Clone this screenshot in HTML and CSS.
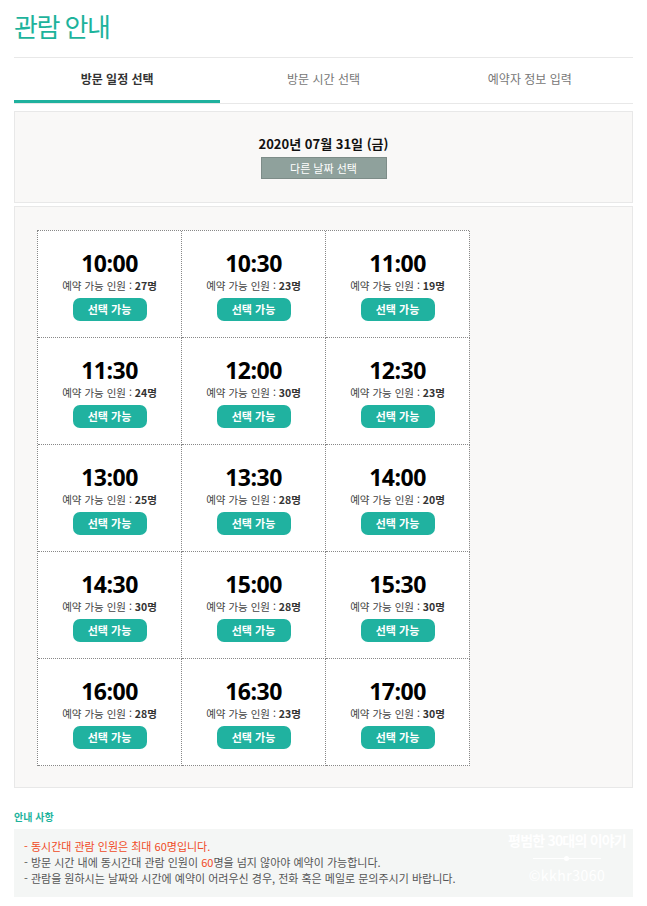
FILE: index.html
```html
<!DOCTYPE html>
<html lang="ko">
<head>
<meta charset="utf-8">
<title>관람 안내</title>
<link rel="stylesheet" href="styles.css">
</head>
<body>
<div class="page">
  <h1 class="title">관람 안내</h1>
  <nav class="tabs">
    <div class="tab active">방문 일정 선택</div>
    <div class="tab">방문 시간 선택</div>
    <div class="tab">예약자 정보 입력</div>
  </nav>
  <section class="date-box">
    <div class="date">2020년 07월 31일 (금)</div>
    <button class="date-btn">다른 날짜 선택</button>
  </section>
  <section class="slots-box">
    <div class="slots">
      <div class="slot"><div class="time">10:00</div><div class="cap">예약 가능 인원 : <b>27명</b></div><button class="pick">선택 가능</button></div>
      <div class="slot"><div class="time">10:30</div><div class="cap">예약 가능 인원 : <b>23명</b></div><button class="pick">선택 가능</button></div>
      <div class="slot"><div class="time">11:00</div><div class="cap">예약 가능 인원 : <b>19명</b></div><button class="pick">선택 가능</button></div>
      <div class="slot"><div class="time">11:30</div><div class="cap">예약 가능 인원 : <b>24명</b></div><button class="pick">선택 가능</button></div>
      <div class="slot"><div class="time">12:00</div><div class="cap">예약 가능 인원 : <b>30명</b></div><button class="pick">선택 가능</button></div>
      <div class="slot"><div class="time">12:30</div><div class="cap">예약 가능 인원 : <b>23명</b></div><button class="pick">선택 가능</button></div>
      <div class="slot"><div class="time">13:00</div><div class="cap">예약 가능 인원 : <b>25명</b></div><button class="pick">선택 가능</button></div>
      <div class="slot"><div class="time">13:30</div><div class="cap">예약 가능 인원 : <b>28명</b></div><button class="pick">선택 가능</button></div>
      <div class="slot"><div class="time">14:00</div><div class="cap">예약 가능 인원 : <b>20명</b></div><button class="pick">선택 가능</button></div>
      <div class="slot"><div class="time">14:30</div><div class="cap">예약 가능 인원 : <b>30명</b></div><button class="pick">선택 가능</button></div>
      <div class="slot"><div class="time">15:00</div><div class="cap">예약 가능 인원 : <b>28명</b></div><button class="pick">선택 가능</button></div>
      <div class="slot"><div class="time">15:30</div><div class="cap">예약 가능 인원 : <b>30명</b></div><button class="pick">선택 가능</button></div>
      <div class="slot"><div class="time">16:00</div><div class="cap">예약 가능 인원 : <b>28명</b></div><button class="pick">선택 가능</button></div>
      <div class="slot"><div class="time">16:30</div><div class="cap">예약 가능 인원 : <b>23명</b></div><button class="pick">선택 가능</button></div>
      <div class="slot"><div class="time">17:00</div><div class="cap">예약 가능 인원 : <b>30명</b></div><button class="pick">선택 가능</button></div>
    </div>
  </section>
  <section class="notice">
    <h2 class="notice-title">안내 사항</h2>
    <div class="notice-box">
      <p class="line warn">- 동시간대 관람 인원은 최대 60명입니다.</p>
      <p class="line">- 방문 시간 내에 동시간대 관람 인원이 <span class="red">60</span>명을 넘지 않아야 예약이 가능합니다.</p>
      <p class="line">- 관람을 원하시는 날짜와 시간에 예약이 어려우신 경우, 전화 혹은 메일로 문의주시기 바랍니다.</p>
      <div class="watermark">
        <div class="wm-title">평범한 30대의 이야기</div>
        <div class="wm-rule"><span class="wm-dot"></span></div>
        <div class="wm-id">©kkhr3060</div>
      </div>
    </div>
  </section>
</div>
</body>
</html>
```

FILE: styles.css
```css
* { box-sizing: border-box; }
body {
  margin: 0;
  background: #fff;
  font-family: "Noto Sans CJK KR", "Noto Sans", sans-serif;
  color: #333;
}
.page { padding: 0 14px; }
.title {
  margin: 0;
  height: 58px;
  padding-top: 7px;
  font-size: 26px;
  font-weight: 400;
  line-height: 38px;
  color: #1db39c;
  letter-spacing: -1.5px;
  border-bottom: 1px solid #e8e8e8;
}
.tabs {
  display: flex;
  height: 46px;
  border-bottom: 1px solid #e8e8e8;
}
.tab {
  flex: 1;
  text-align: center;
  font-size: 12px;
  line-height: 42px;
  color: #777;
}
.tab.active {
  color: #333;
  font-weight: 700;
  border-bottom: 3px solid #1fb19e;
}
.date-box {
  margin-top: 7px;
  height: 92px;
  background: #f9f8f7;
  border: 1px solid #e8e8e8;
  display: flex;
  flex-direction: column;
  align-items: center;
  padding-top: 22px;
}
.date {
  font-size: 13px;
  font-weight: 700;
  color: #111;
  line-height: 20px;
}
.date-btn {
  margin-top: 3px;
  width: 126px;
  height: 22px;
  padding: 0;
  background: #8fa19c;
  border: 1px solid #7d8c88;
  color: #fff;
  font-family: inherit;
  font-size: 11px;
  line-height: 18px;
}
.slots-box {
  margin-top: 3px;
  background: #f9f8f7;
  border: 1px solid #e8e8e8;
  padding: 23px 22px 21px;
}
.slots {
  display: grid;
  grid-template-columns: repeat(3, 144px);
  width: 432px;
  border-top: 1px dotted #888;
  border-left: 1px dotted #888;
  background: #fff;
}
.slot {
  height: 107px;
  border-right: 1px dotted #888;
  border-bottom: 1px dotted #888;
  display: flex;
  flex-direction: column;
  align-items: center;
  padding-top: 17px;
}
.time {
  font-family: "Open Sans", "Noto Sans", sans-serif;
  font-size: 23px;
  font-weight: 700;
  color: #000;
  line-height: 30px;
  letter-spacing: -0.5px;
}
.cap {
  font-size: 10.5px;
  color: #444;
  line-height: 14px;
  margin-top: 1px;
}
.cap b { font-weight: 700; color: #333; }
.pick {
  margin-top: 5px;
  width: 74px;
  height: 23px;
  padding: 0;
  border: none;
  border-radius: 7px;
  background: #20b2a0;
  color: #fff;
  font-family: inherit;
  font-size: 11px;
  font-weight: 700;
  line-height: 23px;
}
.notice { margin-top: 22px; }
.notice-title {
  margin: 0 0 5px;
  font-size: 10px;
  font-weight: 700;
  color: #1db39c;
  line-height: 14px;
}
.notice-box {
  position: relative;
  background: #f4f6f5;
  height: 68px;
  padding: 9px 10px 0;
}
.line {
  margin: 0;
  font-size: 11px;
  line-height: 16px;
  color: #555;
}
.line.warn { color: #f04a25; }
.red { color: #f04a25; }
.watermark {
  position: absolute;
  right: 0;
  top: 0;
  width: 132px;
  text-align: center;
  color: #fff;
}
.wm-title { font-size: 14px; font-weight: 700; line-height: 18px; margin-top: 2px; letter-spacing: -0.8px; }
.wm-rule {
  position: relative;
  margin: 9px auto 0;
  width: 68px;
  height: 1px;
  background: #fff;
}
.wm-dot {
  position: absolute;
  left: 31px;
  top: -2px;
  width: 5px;
  height: 5px;
  border-radius: 50%;
  background: #fff;
}
.wm-id { font-size: 14px; line-height: 18px; margin-top: 7px; letter-spacing: 0.5px; }
```
